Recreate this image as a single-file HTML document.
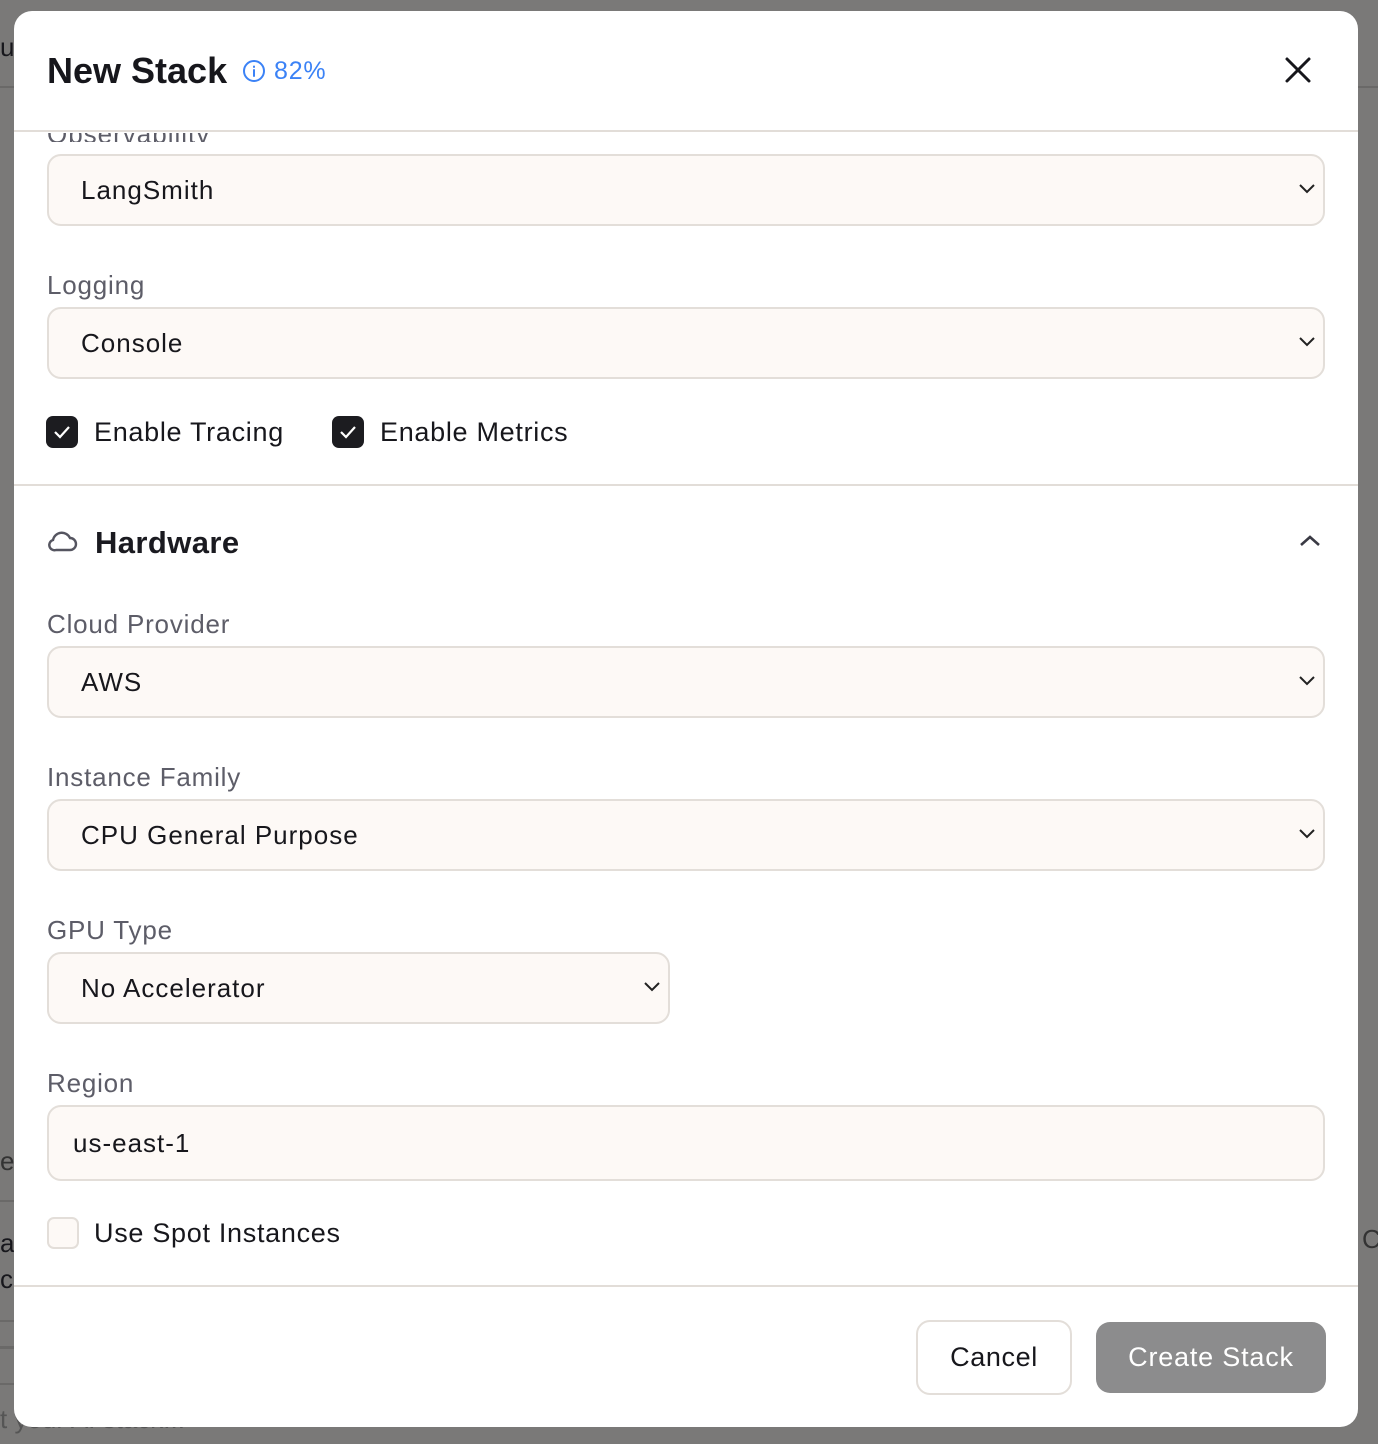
<!DOCTYPE html>
<html><head><meta charset="utf-8"><style>
*{box-sizing:border-box;margin:0;padding:0}
body{width:1378px;height:1444px;background:#7a7978;position:relative;overflow:hidden;font-family:"Liberation Sans",sans-serif;color:#17171c}
.a{position:absolute}
.modal{left:14px;top:11px;width:1344px;height:1416px;background:#fff;border-radius:18px;overflow:hidden}
.line{position:absolute;left:0;width:1344px;height:2px;background:#e2ddd8}
.sel{position:absolute;left:33px;width:1278px;height:72px;background:#fdf9f6;border:2px solid #e3ded9;border-radius:14px;font-size:26px;padding-left:32px;line-height:68px;letter-spacing:1px}
.sel svg{position:absolute;right:6px;top:25px}
.lbl{position:absolute;left:33px;font-size:26px;color:#5d5d68;letter-spacing:0.8px}
.cb{position:absolute;width:32px;height:32px;border-radius:7px;background:#1c1c20}
.txt{position:absolute;font-size:27px;letter-spacing:0.7px}
</style></head><body>
<div class="a" style="left:0;top:86px;width:14px;height:2px;background:#6a6968"></div>
<div class="a" style="left:0;top:1200px;width:14px;height:2px;background:#6a6968"></div>
<div class="a" style="left:0;top:1320px;width:14px;height:2px;background:#6a6968"></div>
<div class="a" style="left:0;top:1346px;width:14px;height:3px;background:#6a6968"></div>
<div class="a" style="left:0;top:1383px;width:14px;height:2px;background:#6a6968"></div>
<div class="a" style="left:0;top:32px;font-size:26px;width:14px;overflow:hidden">up</div>
<div class="a" style="left:0;top:1146px;font-size:26px;width:14px;overflow:hidden;color:#333">e</div>
<div class="a" style="left:0;top:1228px;font-size:26px;width:14px;overflow:hidden">a</div>
<div class="a" style="left:0;top:1264px;font-size:26px;width:14px;overflow:hidden">c</div>
<div class="a" style="left:0;top:1404px;font-size:26px;color:#555;white-space:nowrap">t your AI stack...</div>
<div class="a" style="left:1362px;top:1224px;font-size:26px;color:#333">C</div>
<div class="a" style="left:1358px;top:86px;width:20px;height:2px;background:#6a6968"></div>

<div class="a modal">
 <div class="a" style="left:33px;top:39px;font-size:36px;font-weight:bold;letter-spacing:0px">New Stack</div>
 <svg class="a" style="left:228px;top:48px" width="24" height="24" viewBox="0 0 24 24" fill="none" stroke="#3b82f6" stroke-width="2"><circle cx="12" cy="12" r="10"/><path d="M12 11v6M12 7.5v.5" stroke-linecap="round"/></svg>
 <div class="a" style="left:260px;top:46px;font-size:25px;color:#3b82f6;letter-spacing:0.8px">82%</div>
 <svg class="a" style="left:1270px;top:45px" width="28" height="28" viewBox="0 0 28 28" stroke="#17171c" stroke-width="3" stroke-linecap="round"><path d="M3 3L25 25M25 3L3 25"/></svg>
 <div class="a" style="left:0;top:122px;width:1344px;height:9px;overflow:hidden"><div class="a" style="left:33px;top:-14px;font-size:26px;color:#5d5d68;letter-spacing:1px">Observability</div></div>
 <div class="line" style="top:119px"></div>

 <div class="sel" style="top:143px">LangSmith<svg width="20" height="14" viewBox="0 0 20 14" fill="none" stroke="#222" stroke-width="2"><path d="M3 4l7 7 7-7"/></svg></div>
 <div class="lbl" style="top:259px">Logging</div>
 <div class="sel" style="top:296px">Console<svg width="20" height="14" viewBox="0 0 20 14" fill="none" stroke="#222" stroke-width="2"><path d="M3 4l7 7 7-7"/></svg></div>
 <div class="cb" style="left:32px;top:405px"><svg width="32" height="32" viewBox="0 0 32 32" fill="none" stroke="#fff" stroke-width="2.2"><path d="M9 16l5 5 9-10"/></svg></div>
 <div class="txt" style="left:80px;top:406px">Enable Tracing</div>
 <div class="cb" style="left:318px;top:405px"><svg width="32" height="32" viewBox="0 0 32 32" fill="none" stroke="#fff" stroke-width="2.2"><path d="M9 16l5 5 9-10"/></svg></div>
 <div class="txt" style="left:366px;top:406px">Enable Metrics</div>
 <div class="line" style="top:473px"></div>

 <svg class="a" style="left:33px;top:518px" width="32" height="26" viewBox="0 0 32 26" fill="none" stroke="#555560" stroke-width="2.4"><path d="M9 21h14a6 6 0 0 0 0-12 9 9 0 0 0-17 2 5 5 0 0 0 3 10z"/></svg>
 <div class="a" style="left:81px;top:514px;font-size:31px;font-weight:bold;letter-spacing:0.4px;color:#1a1a20">Hardware</div>
 <svg class="a" style="left:1284px;top:522px" width="24" height="16" viewBox="0 0 24 16" fill="none" stroke="#3a3a44" stroke-width="2.6"><path d="M3 12l9-8 9 8"/></svg>

 <div class="lbl" style="top:598px">Cloud Provider</div>
 <div class="sel" style="top:635px">AWS<svg width="20" height="14" viewBox="0 0 20 14" fill="none" stroke="#222" stroke-width="2"><path d="M3 4l7 7 7-7"/></svg></div>
 <div class="lbl" style="top:751px">Instance Family</div>
 <div class="sel" style="top:788px">CPU General Purpose<svg width="20" height="14" viewBox="0 0 20 14" fill="none" stroke="#222" stroke-width="2"><path d="M3 4l7 7 7-7"/></svg></div>
 <div class="lbl" style="top:904px">GPU Type</div>
 <div class="sel" style="top:941px;width:623px">No Accelerator<svg width="20" height="14" viewBox="0 0 20 14" fill="none" stroke="#222" stroke-width="2"><path d="M3 4l7 7 7-7"/></svg></div>
 <div class="lbl" style="top:1057px">Region</div>
 <div class="sel" style="top:1094px;height:76px;line-height:72px;padding-left:24px">us-east-1</div>
 <div class="a" style="left:33px;top:1206px;width:32px;height:32px;border-radius:7px;background:#fdf9f6;border:2px solid #e3ded9"></div>
 <div class="txt" style="left:80px;top:1207px">Use Spot Instances</div>
 <div class="line" style="top:1274px"></div>

 <div class="a" style="left:902px;top:1309px;width:156px;height:75px;border:2px solid #e3ded9;border-radius:14px;font-size:27px;text-align:center;line-height:71px;letter-spacing:0.6px">Cancel</div>
 <div class="a" style="left:1082px;top:1311px;width:230px;height:71px;background:#8c8c8d;border-radius:14px;font-size:27px;color:#fff;text-align:center;line-height:71px;letter-spacing:0.8px">Create Stack</div>
</div>
</body></html>
